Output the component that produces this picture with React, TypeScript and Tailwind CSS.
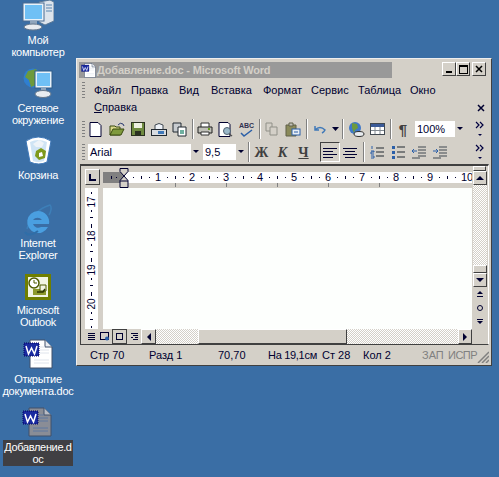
import React from 'react';

const MENU_1 = [
  { label: 'Файл', w: 'w-[37px]' },
  { label: 'Правка', w: 'w-[48px]' },
  { label: 'Вид', w: 'w-[32px]' },
  { label: 'Вставка', w: 'w-[52px]' },
  { label: 'Формат', w: 'w-[48px]' },
  { label: 'Сервис', w: 'w-[47px]' },
  { label: 'Таблица', w: 'w-[52px]' },
  { label: 'Окно', w: 'w-[40px]' },
];

const CHECK = 'bg-[repeating-conic-gradient(#d4d0c8_0%_25%,#ffffff_0%_50%)] bg-[length:2px_2px]';

function MyComputerIcon() {
  return (
    <svg width="32" height="31" viewBox="0 0 32 31">
      <path d="M17 2l11-2 4 2v19l-9 4-6-3z" fill="#dde4ec" stroke="#5a7896" />
      <path d="M24 5h6M24 8h6M24 11h6" stroke="#5a86b0" />
      <rect x="1" y="3" width="21" height="18" fill="#e8f2fa" stroke="#4a6a90" />
      <rect x="3" y="5" width="17" height="14" fill="#6fc0f5" />
      <path d="M8 21h7v4H8z" fill="#8fa5bb" />
      <ellipse cx="11" cy="27" rx="9" ry="3" fill="#e8ecf0" stroke="#66788c" />
    </svg>
  );
}

function NetworkIcon() {
  return (
    <svg width="30" height="30" viewBox="0 0 30 30">
      <circle cx="10" cy="10" r="9.5" fill="#2f7fd0" />
      <path d="M5 3l8-2 4 5-5 4 1 7-5 2-2-7-4-3z" fill="#6d9a3c" />
      <rect x="12" y="3" width="17" height="17" fill="#e8f2fa" stroke="#2f5c8a" />
      <rect x="14" y="5" width="13" height="13" fill="#6fc0f5" />
      <path d="M18 20h5v4h-5z" fill="#8fa5bb" />
      <ellipse cx="20" cy="26" rx="8" ry="3.5" fill="#e8ecf0" stroke="#66788c" />
    </svg>
  );
}

function RecycleIcon() {
  return (
    <svg width="27" height="30" viewBox="0 0 27 30">
      <path d="M1 6q12-8 25 0l-4 21q-8 4-17 0z" fill="#fff" stroke="#3f78b8" />
      <path d="M5 7q8-4 17 0l-3 19q-6 2-11 0z" fill="#cfe4f5" />
      <path d="M8 9l6-4 5 3-2 4h-6z" fill="#eef3f8" />
      <path d="M11 16l5-3 5 3-1 7-6 2-4-4z" fill="#7f9a1c" />
      <path d="M14 18l3-1 1 4-4 1z" fill="#fff" />
    </svg>
  );
}

function IeIcon() {
  return (
    <svg width="28" height="33" viewBox="0 0 28 33">
      <path d="M3 25C6 12 16 4 26 1c2 2 1 7-1 10" fill="none" stroke="#3d7fb8" strokeWidth="1.5" />
      <path d="M14 7a11 11 0 1 0 10 16h-7a5.500 5.500 0 0 1-8-3h16a11 11 0 0 0-11-13zm-5 9a5.500 5.500 0 0 1 9 0z" fill="#4a9fe0" fillRule="evenodd" />
      <path d="M1 28c2 4 8 3 13-1" fill="none" stroke="#2f6ea8" strokeWidth="2" />
    </svg>
  );
}

function OutlookIcon() {
  return (
    <svg width="26" height="26" viewBox="0 0 26 26">
      <rect width="26" height="26" fill="#6f7f00" />
      <rect x="3" y="3" width="20" height="20" fill="#f2f5e4" />
      <circle cx="9" cy="9" r="5" fill="#fff" stroke="#4d5a00" strokeWidth="1.500" />
      <path d="M9 6v3h3" fill="none" stroke="#4d5a00" />
      <path d="M8 15h13v6H8z" fill="#8d9a2a" />
      <path d="M15 11h6v6h-6z" fill="#f2f5e4" stroke="#4d5a00" />
      <path d="M12 18h6l2-3" fill="none" stroke="#2d3500" strokeWidth="1.500" />
    </svg>
  );
}

function WordDocIcon({ dark = false, small = false }: { dark?: boolean; small?: boolean }) {
  const page = dark ? '#8a8d96' : '#ffffff';
  const size = small ? 15 : 30;
  return (
    <svg width={size} height={size} viewBox="0 0 30 30">
      <path d="M7 1h15l7 7v21H7z" fill={page} stroke="#40506a" />
      <path d="M22 1v7h7" fill={dark ? '#b9bcc4' : '#e8ecf2'} stroke="#40506a" />
      <path d="M17 8h5M17 11h9M17 14h9M11 21h15M11 24h15" stroke={dark ? '#5f78a0' : '#dfe4ec'} />
      <rect x="1" y="4" width="15" height="13" fill="#1a2ba0" stroke="#000060" strokeDasharray="1 1" />
      <path d="M3 7l2.500 8 3-6 3 6L14 7" fill="none" stroke="#fff" strokeWidth="1.500" />
    </svg>
  );
}

function DesktopIcon({ top, labelGap, lines, children }: { top: string; labelGap: string; lines: string[]; children: React.ReactNode }) {
  return (
    <div className={`absolute left-0 flex w-[76px] flex-col items-center ${top}`}>
      {children}
      <div className={`${labelGap} whitespace-nowrap text-center text-[11px] leading-[12px] tracking-[-0.25px] text-white`}>
        {lines.map((l) => (
          <div key={l}>{l}</div>
        ))}
      </div>
    </div>
  );
}

function Grip() {
  return <div className="ml-[3px] h-[17px] w-[3px] shrink-0 bg-[repeating-linear-gradient(to_bottom,#808080_0,#808080_1px,#d4d0c8_1px,#d4d0c8_3px)]" />;
}

function Sep({ className }: { className: string }) {
  return <div className={`h-[20px] w-[2px] shrink-0 border-l border-r border-l-[#808080] border-r-white ${className}`} />;
}

function Tool({ children, className = 'w-[21px]' }: { children: React.ReactNode; className?: string }) {
  return <div className={`flex h-[20px] shrink-0 items-center justify-center ${className}`}>{children}</div>;
}

function Chevrons() {
  return (
    <svg className="ml-auto mr-[3px] shrink-0" width="16" height="20" viewBox="0 0 16 20">
      <path d="M4 3l3 3-3 3M8 3l3 3-3 3" fill="none" stroke="#000040" strokeWidth="1.200" />
      <path d="M6 15h4l-2 2z" fill="#000040" />
    </svg>
  );
}

function Raised({ className, children }: { className: string; children?: React.ReactNode }) {
  return (
    <div className={`flex shrink-0 items-center justify-center border border-t-white border-l-white border-r-[#404040] border-b-[#404040] bg-[#d4d0c8] ${className}`}>
      {children}
    </div>
  );
}

function Tri({ dir }: { dir: 'up' | 'down' | 'left' | 'right' }) {
  const d = { up: 'M0 6L4 2l4 4z', down: 'M0 2h8L4 6z', left: 'M6 0v8L2 4z', right: 'M2 0v8l4-4z' }[dir];
  return (
    <svg width="8" height="8" viewBox="0 0 8 8">
      <path d={d} fill="#000030" />
    </svg>
  );
}

function Combo({ text, className }: { text: string; className: string }) {
  return (
    <div className={`flex h-[16px] shrink-0 items-center bg-white pl-[2px] text-[11px] text-[#000030] ${className}`}>
      <span className="flex-1">{text}</span>
      <div className="flex h-full w-[10px] items-center justify-center bg-[#d4d0c8]">
        <svg width="6" height="4" viewBox="0 0 6 4">
          <path d="M0 0h6L3 3z" fill="#000030" />
        </svg>
      </div>
    </div>
  );
}

function Ruler() {
  const nums = [1, 2, 3, 4, 5, 6, 7, 8, 9, 10];
  return (
    <div className="flex h-[11px] items-center text-[11px] leading-none text-[#000030]">
      <div className="flex h-full w-[21px] shrink-0 items-center justify-center gap-[4px] bg-[#808080]">
        <span className="h-[3px] w-px bg-[#000030]" />
        <span className="h-px w-px bg-[#000030]" />
      </div>
      <div className="flex h-full w-[348px] items-center overflow-hidden bg-white">
        {nums.map((n) => (
          <div key={n} className="relative flex h-full w-[34px] shrink-0 items-center">
            <span className="ml-[9px] h-px w-px bg-[#000030]" />
            <span className="ml-[7px] h-[3px] w-px bg-[#000030]" />
            <span className="ml-[7px] h-px w-px bg-[#000030]" />
            <span className="absolute right-[-3px] z-10 w-[6px] text-center">{n}</span>
          </div>
        ))}
      </div>
    </div>
  );
}

function VRuler() {
  const nums = [17, 18, 19, 20];
  return (
    <div className="flex w-[13px] shrink-0 flex-col items-center overflow-hidden bg-white text-[10px] leading-none text-[#000030]">
      <div className="h-[4px] shrink-0" />
      {nums.map((n) => (
        <div key={n} className="flex h-[34px] shrink-0 flex-col items-center">
          <span className="h-[2px] w-px shrink-0 bg-[#000030]" />
          <span className="mt-[2px] flex h-[12px] w-[13px] shrink-0 -rotate-90 items-center justify-center">{n}</span>
          <span className="mt-[2px] h-[2px] w-px shrink-0 bg-[#000030]" />
          <span className="mt-[5px] h-px w-[3px] shrink-0 bg-[#000030]" />
          <span className="mt-[6px] h-[2px] w-px shrink-0 bg-[#000030]" />
        </div>
      ))}
    </div>
  );
}

function Lines({ kind }: { kind: 'left' | 'center' }) {
  const d = kind === 'left' ? 'M1 2.500h14M1 5.500h10M1 8.500h14M1 11.500h10' : 'M1 2.500h14M3 5.500h10M1 8.500h14M3 11.500h10';
  return (
    <svg width="16" height="13" viewBox="0 0 16 13">
      <path d={d} stroke="#000030" />
    </svg>
  );
}

export default function App() {
  return (
    <div className='relative h-[477px] w-[499px] overflow-hidden bg-[#3a6ea5] font-["Liberation_Sans",Arial,sans-serif]'>
      {/* Desktop icons */}
      <DesktopIcon top="top-0" labelGap="mt-[3px]" lines={['Мой', 'компьютер']}>
        <MyComputerIcon />
      </DesktopIcon>
      <DesktopIcon top="top-[68px]" labelGap="mt-[4px]" lines={['Сетевое', 'окружение']}>
        <NetworkIcon />
      </DesktopIcon>
      <DesktopIcon top="top-[135px]" labelGap="mt-[4px]" lines={['Корзина']}>
        <RecycleIcon />
      </DesktopIcon>
      <DesktopIcon top="top-[204px]" labelGap="mt-0" lines={['Internet', 'Explorer']}>
        <IeIcon />
      </DesktopIcon>
      <DesktopIcon top="top-[274px]" labelGap="mt-[4px]" lines={['Microsoft', 'Outlook']}>
        <OutlookIcon />
      </DesktopIcon>
      <DesktopIcon top="top-[339px]" labelGap="mt-[4px]" lines={['Открытие', 'документа.doc']}>
        <WordDocIcon />
      </DesktopIcon>
      <div className="absolute left-0 top-[407px] flex w-[74px] flex-col items-center">
        <WordDocIcon dark />
        <div className="ml-[2px] mt-[3px] w-[70px] bg-[#403f43] py-[1px] text-center text-[11px] leading-[12px] tracking-[-0.35px] text-white">
          <div>Добавление.d</div>
          <div>oc</div>
        </div>
      </div>

      {/* Word window */}
      <div className="absolute left-[76px] top-[58px] flex h-[308px] w-[416px] flex-col border border-t-[#eeeeee] border-l-[#eeeeee] border-r-[#404040] border-b-[#404040] bg-[#d4d0c8] text-[#000030]">
        {/* Title bar */}
        <div className="mt-[3px] flex h-[16px] shrink-0 pl-[2px]">
          <div className="flex w-[313px] items-center gap-[1px] bg-[#999999] pl-[2px]">
            <WordDocIcon small />
            <span className="whitespace-nowrap text-[11px] font-bold tracking-[-0.2px] text-[#d4d0c8]">Добавление.doc - Microsoft Word</span>
          </div>
          <div className="ml-[50px] flex h-[14px] items-center">
            <Raised className="h-[14px] w-[14px] items-end">
              <span className="mb-[2px] h-[2px] w-[6px] bg-black" />
            </Raised>
            <Raised className="h-[14px] w-[14px]">
              <span className="h-[9px] w-[9px] border border-t-2 border-black" />
            </Raised>
            <Raised className="ml-[2px] h-[14px] w-[14px]">
              <svg width="8" height="8" viewBox="0 0 8 8">
                <path d="M1 1l6 6M7 1L1 7" stroke="#000" strokeWidth="1.500" />
              </svg>
            </Raised>
          </div>
        </div>

        {/* Menu */}
        <div className="mt-[4px] flex h-[17px] shrink-0 items-center pl-[2px] text-[11px]">
          <Grip />
          <div className="ml-[9px] flex">
            {MENU_1.map((m) => (
              <span key={m.label} className={m.w}>
                {m.label}
              </span>
            ))}
          </div>
        </div>
        <div className="flex h-[17px] shrink-0 items-center pl-[17px] text-[11px]">
          <span>
            <span className="underline">С</span>правка
          </span>
          <svg className="ml-auto mr-[6px]" width="8" height="8" viewBox="0 0 8 8">
            <path d="M1 1l6 6M7 1L1 7" stroke="#000030" strokeWidth="1.500" />
          </svg>
        </div>

        {/* Standard toolbar */}
        <div className="mt-[3px] flex h-[20px] shrink-0 items-center pl-[2px]">
          <Grip />
          <Tool>
            <svg width="13" height="15" viewBox="0 0 13 15"><path d="M1 .5h8l3 3v11H1z" fill="#fff" stroke="#000030" /></svg>
          </Tool>
          <Tool>
            <svg width="16" height="14" viewBox="0 0 16 14"><path d="M1 4h5l1 1h4v8H1z" fill="#d9d98a" stroke="#3a4a10" /><path d="M1 13l3-6h11l-3 6z" fill="#7f9a3c" stroke="#3a4a10" /><path d="M9 3q2-3 5-1l1 2" fill="none" stroke="#2a3a70" /></svg>
          </Tool>
          <Tool>
            <svg width="14" height="14" viewBox="0 0 14 14"><rect x=".5" y=".5" width="13" height="13" fill="#6f8a40" stroke="#2a3020" /><rect x="3" y="1" width="8" height="5" fill="#eef0e0" /><rect x="4" y="9" width="6" height="4" fill="#2a3020" /></svg>
          </Tool>
          <Tool>
            <svg width="16" height="15" viewBox="0 0 16 15"><path d="M4 7V3q4-3 8 0v4" fill="#eef2f8" stroke="#404850" /><rect x=".5" y="7.500" width="15" height="6" fill="#d8dce0" stroke="#202830" /><rect x="7" y="9" width="6" height="3" fill="#3f78b8" /></svg>
          </Tool>
          <Tool>
            <svg width="15" height="15" viewBox="0 0 15 15"><path d="M1 1h8v9H1z" fill="#c8ccd0" stroke="#202830" /><path d="M6 5h8v9H6z" fill="#fff" stroke="#202830" /><path d="M8 8h4v4H8z" fill="#6fb0a0" /></svg>
          </Tool>
          <Sep className="ml-[2px]" />
          <Tool>
            <svg width="16" height="14" viewBox="0 0 16 14"><path d="M4 5V1h8v4" fill="#fff" stroke="#303030" /><path d="M1 5h14v6H1z" fill="#c0c0b8" stroke="#202020" /><path d="M4 10h8v3H4z" fill="#fff" stroke="#303030" /><path d="M11 7h2" stroke="#6a9a20" strokeWidth="2" /></svg>
          </Tool>
          <Tool>
            <svg width="15" height="15" viewBox="0 0 15 15"><path d="M1 .5h9l2 2v12H1z" fill="#fff" stroke="#000030" /><circle cx="9" cy="9" r="3.500" fill="#9ab8c8" stroke="#506070" /><path d="M11 12l3 2" stroke="#505050" strokeWidth="1.500" /></svg>
          </Tool>
          <Tool>
            <div className="flex flex-col items-center">
              <span className="text-[7px] font-bold leading-[7px] text-[#303050]">ABC</span>
              <svg width="13" height="8" viewBox="0 0 13 8"><path d="M1 4l3 3 8-6" fill="none" stroke="#2a5fa8" strokeWidth="1.500" /></svg>
            </div>
          </Tool>
          <Sep className="ml-[2px]" />
          <Tool>
            <svg width="13" height="14" viewBox="0 0 13 14"><path d="M1 1h6v8H1z" fill="#d4d0c8" stroke="#909088" /><path d="M5 5h7v8H5z" fill="#d4d0c8" stroke="#909088" /></svg>
          </Tool>
          <Tool>
            <svg width="16" height="15" viewBox="0 0 16 15"><path d="M1 3h10v11H1z" fill="#8a8a5a" stroke="#606048" /><path d="M4 1h4v3H4z" fill="#c0c0b8" stroke="#606048" /><rect x="7" y="7" width="8" height="6" fill="#e8eef4" stroke="#2a5fa8" /><path d="M9 10h4" stroke="#2a5fa8" /></svg>
          </Tool>
          <Sep className="ml-[3px]" />
          <Tool className="ml-[4px] w-[16px]">
            <svg width="13" height="9" viewBox="0 0 13 9"><path d="M1 1v4h4M1 5q5-5 10 0-1 2-3 3" fill="none" stroke="#3f78b8" strokeWidth="1.500" /></svg>
          </Tool>
          <Tool className="ml-[2px] w-[10px]">
            <svg width="7" height="4" viewBox="0 0 7 4"><path d="M0 0h7L3.500 4z" fill="#000030" /></svg>
          </Tool>
          <Sep className="ml-[2px]" />
          <Tool className="ml-[2px] w-[21px]">
            <svg width="17" height="16" viewBox="0 0 17 16"><circle cx="7" cy="7" r="6" fill="#3f78c8" /><path d="M4 2l5 1 1 4-3 2-1 3-2-5z" fill="#6d9a3c" /><ellipse cx="11" cy="13" rx="5" ry="2.500" fill="#e8ecf0" stroke="#303030" /></svg>
          </Tool>
          <Tool>
            <svg width="15" height="12" viewBox="0 0 15 12"><rect x=".5" y=".5" width="14" height="11" fill="#fff" stroke="#404850" /><rect x="1" y="1" width="13" height="3" fill="#3a5a98" /><path d="M5 4v7M10 4v7M1 7.500h13" stroke="#808890" /></svg>
          </Tool>
          <Sep className="ml-[2px]" />
          <Tool className="ml-[1px] w-[20px]">
            <span className="text-[15px] font-bold leading-none text-[#404040]">¶</span>
          </Tool>
          <Combo text="100%" className="ml-[2px] w-[50px]" />
          <Chevrons />
        </div>

        {/* Formatting toolbar */}
        <div className="mt-[3px] flex h-[20px] shrink-0 items-center pl-[2px]">
          <Grip />
          <Combo text="Arial" className="ml-[3px] w-[113px]" />
          <Combo text="9,5" className="ml-[2px] w-[43px]" />
          <Sep className="ml-[2px]" />
          <Tool className="ml-[1px] w-[21px]">
            <span className='font-["Liberation_Serif",serif] text-[14px] font-bold text-[#404040]'>Ж</span>
          </Tool>
          <Tool>
            <span className='font-["Liberation_Serif",serif] text-[14px] font-bold italic text-[#404040]'>К</span>
          </Tool>
          <Tool>
            <span className='font-["Liberation_Serif",serif] text-[14px] font-bold text-[#404040] underline'>Ч</span>
          </Tool>
          <div className="ml-[6px] flex h-[20px] w-[20px] shrink-0 items-center justify-center border border-t-[#404040] border-l-[#404040] border-r-white border-b-white">
            <Lines kind="left" />
          </div>
          <Tool className="w-[20px]">
            <Lines kind="center" />
          </Tool>
          <Sep className="ml-[3px]" />
          <Tool className="ml-[1px] w-[21px]">
            <svg width="14" height="14" viewBox="0 0 14 14"><path d="M6 3h8M6 7h8M6 11h8" stroke="#202830" /><path d="M2 1v3M1 6h3v1H1v2h3M1 11h3v2H1" fill="none" stroke="#2a5fa8" /></svg>
          </Tool>
          <Tool>
            <svg width="14" height="14" viewBox="0 0 14 14"><path d="M6 2h8M6 7h8M6 12h8" stroke="#202830" /><path d="M1 1h3v3H1zM1 6h3v3H1zM1 11h3v3H1z" fill="#2a5fa8" /></svg>
          </Tool>
          <Tool>
            <svg width="15" height="13" viewBox="0 0 15 13"><path d="M7 1h8M7 4h8M7 7h8M7 10h8M1 12h8" stroke="#404850" /><path d="M1 5h5M1 5l2-2M1 5l2 2" fill="none" stroke="#2a5fa8" /></svg>
          </Tool>
          <Tool>
            <svg width="15" height="13" viewBox="0 0 15 13"><path d="M7 1h8M7 4h8M7 7h8M7 10h8M1 12h8" stroke="#404850" /><path d="M1 5h5M6 5L4 3M6 5L4 7" fill="none" stroke="#2a5fa8" /></svg>
          </Tool>
          <Chevrons />
        </div>

        {/* Document frame */}
        <div className="relative ml-[3px] mr-[2px] mt-[2px] flex h-[181px] shrink-0 border-b border-l border-r border-t-2 border-b-[#404040] border-l-[#404040] border-r-white border-t-[#404040] pl-[4px]">
          <div className="flex w-[387px] shrink-0 flex-col">
            <div className="relative flex h-[22px] shrink-0">
              <div className="mt-[3px] flex h-[16px] w-[15px] shrink-0 items-center justify-center border border-t-white border-l-white border-r-[#404040] border-b-[#404040]">
                <span className="h-[7px] w-[7px] border-b-2 border-l-2 border-[#000030]" />
              </div>
              <div className="ml-[3px] flex w-[369px] flex-col">
                <div className="mt-[6px]">
                  <Ruler />
                </div>
                <div className="flex h-[5px]">
                  {[72, 123, 174, 225, 277].map((x, i) => (
                    <span key={x} className={`h-[4px] w-px bg-[#808080] ${i === 0 ? 'ml-[72px]' : 'ml-[50px]'}`} />
                  ))}
                </div>
              </div>
              {/* indent marker */}
              <svg className="absolute left-[34px] top-[2px]" width="10" height="20" viewBox="0 0 10 20">
                <path d="M1 .5h8v3L5 8l4 4.500v7H1v-7L5 8 1 3.500z" fill="#d4d0c8" stroke="#000030" />
                <path d="M1 13h8" stroke="#000030" />
              </svg>
            </div>
            <div className="flex h-[141px] shrink-0">
              <VRuler />
              <div className="ml-[5px] w-[369px] bg-[#fdfffd]" />
            </div>
            <div className="flex h-[15px] shrink-0 items-center">
              <Tool className="h-[15px] w-[12px]">
                <svg width="9" height="9" viewBox="0 0 9 9"><path d="M1 1.500h7M1 3.500h7M1 5.500h7M1 7.500h7" stroke="#000030" /></svg>
              </Tool>
              <Tool className="h-[15px] w-[15px]">
                <svg width="10" height="9" viewBox="0 0 10 9"><rect x=".5" y=".5" width="8" height="7" fill="none" stroke="#000030" /><circle cx="7" cy="6.500" r="2" fill="#2a5fa8" /></svg>
              </Tool>
              <div className="flex h-[15px] w-[15px] shrink-0 items-center justify-center border border-[#404040]">
                <span className="h-[7px] w-[7px] border border-[#000030]" />
              </div>
              <Tool className="h-[15px] w-[14px]">
                <svg width="9" height="9" viewBox="0 0 9 9"><path d="M1 1.500h7M3 3.500h5M1 5.500h2M5 5.500h3M3 7.500h5" stroke="#000030" /></svg>
              </Tool>
              <Raised className="h-[15px] w-[15px]">
                <Tri dir="left" />
              </Raised>
              <div className={`h-[15px] w-[42px] shrink-0 ${CHECK}`} />
              <Raised className="h-[15px] w-[149px]" />
              <div className={`h-[15px] flex-1 ${CHECK}`} />
              <Raised className="h-[15px] w-[14px]">
                <Tri dir="right" />
              </Raised>
            </div>
          </div>

          {/* Vertical scroll bar */}
          <div className="flex w-[15px] shrink-0 flex-col items-center">
            <Raised className="h-[5px] w-[13px]" />
            <Raised className="h-[14px] w-[14px]">
              <Tri dir="up" />
            </Raised>
            <div className={`h-[80px] w-[14px] shrink-0 ${CHECK}`} />
            <Raised className="h-[8px] w-[14px]" />
            <Raised className="h-[14px] w-[14px]">
              <Tri dir="down" />
            </Raised>
            <svg className="mt-[1px]" width="8" height="44" viewBox="0 0 8 44">
              <path d="M4 3L1 6h6z" fill="#000030" />
              <path d="M1 8.500h6" stroke="#000030" />
              <circle cx="4" cy="20" r="2.500" fill="none" stroke="#000030" />
              <path d="M1 31.500h6" stroke="#000030" />
              <path d="M1 33h6l-3 3z" fill="#000030" />
            </svg>
          </div>
        </div>

        {/* Status bar */}
        <div className="relative mt-[1px] flex h-[18px] shrink-0 items-center pl-[13px] text-[11px] text-[#000030]">
          <span className="w-[59px]">Стр 70</span>
          <span className="w-[69px]">Разд 1</span>
          <span className="w-[50px]">70,70</span>
          <span className="w-[54px] tracking-[-0.3px]">На 19,1см</span>
          <span className="w-[41px]">Ст 28</span>
          <span className="w-[59px]">Кол 2</span>
          <span className="w-[26px] text-[#808080]">ЗАП</span>
          <span className="tracking-[-0.5px] text-[#808080]">ИСПР</span>
          <svg className="absolute right-[2px] bottom-[1px]" width="12" height="12" viewBox="0 0 12 12">
            <path d="M1 12L12 1M5 12l7-7M9 12l3-3" stroke="#808080" strokeWidth="1.500" />
          </svg>
        </div>
      </div>
    </div>
  );
}
